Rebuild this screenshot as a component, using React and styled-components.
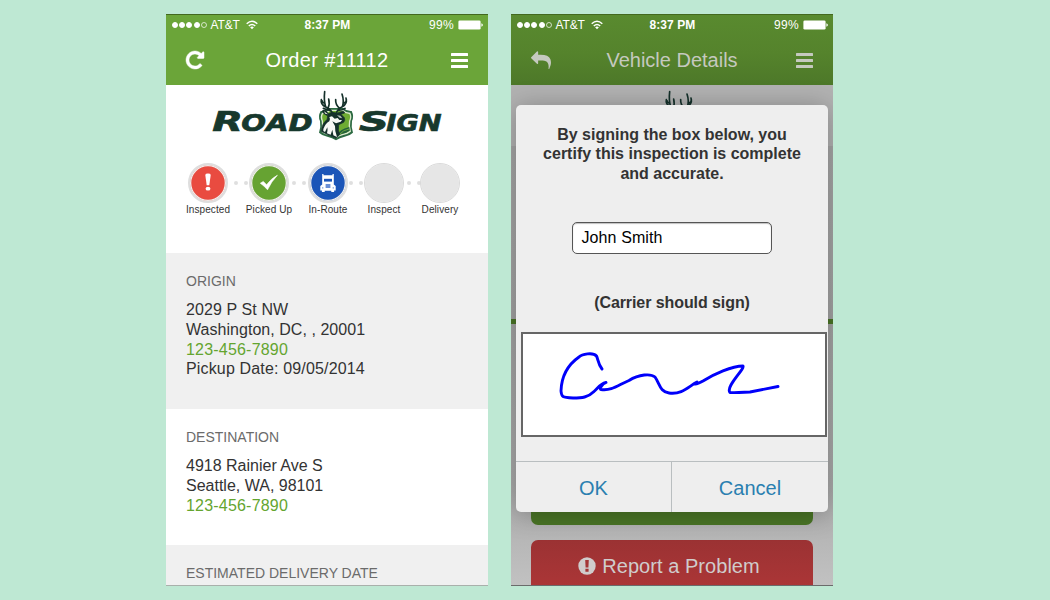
import React from "react";
import styled, { createGlobalStyle } from "styled-components";

const GlobalStyle = createGlobalStyle`
  * { box-sizing: border-box; }
  body {
    margin: 0;
    background: #bee8d3;
    font-family: "Liberation Sans", Arial, sans-serif;
    color: #333;
  }
`;

const Stage = styled.main`
  display: flex;
  gap: 23px;
  width: 1050px;
  height: 600px;
  padding: 14px 0 0 166px;
  overflow: hidden;
  background: #bee8d3;
`;

const Phone = styled.section`
  position: relative;
  display: flex;
  flex-direction: column;
  width: 322px;
  height: 572px;
  overflow: hidden;
  background: ${(p) => (p.$dimmed ? "#b2b2b2" : "#fff")};
  border-bottom: 1px solid ${(p) => (p.$dimmed ? "#6b6b6b" : "#a9b0ab")};
`;

const Header = styled.header`
  flex: none;
  height: 71px;
  border-top: 1px solid #43681f;
  color: #fff;
  background: ${(p) =>
    p.$dimmed ? "linear-gradient(#598a2f, #55832c 55%, #4d7829)" : "#6ba539"};
`;

const StatusBar = styled.div`
  display: grid;
  grid-template-columns: 1fr auto 1fr;
  align-items: center;
  height: 20px;
  padding: 0 5px 0 6px;
  font-size: 12px;
`;

const Carrier = styled.div`
  display: flex;
  align-items: center;
  gap: 1.2px;
  svg { margin-left: 4.5px; }
`;

const CarrierName = styled.span`
  margin-left: 2.5px;
  font-size: 12px;
  letter-spacing: -0.1px;
`;

const SignalDot = styled.i`
  width: 6px;
  height: 6px;
  border-radius: 50%;
  border: 1px solid #fff;
  background: ${(p) => (p.$on ? "#fff" : "transparent")};
  opacity: ${(p) => (p.$on ? 1 : 0.7)};
`;

const Clock = styled.b`
  font-size: 12px;
  letter-spacing: 0.08px;
`;

const Power = styled.div`
  display: flex;
  align-items: center;
  justify-content: flex-end;
  gap: 4px;
  letter-spacing: 0.35px;
`;

const NavBar = styled.div`
  display: flex;
  align-items: center;
  justify-content: space-between;
  height: 50px;
  padding: 0 20px;
  color: ${(p) => (p.$dimmed ? "#c5c9bf" : "#fff")};
`;

const NavTitle = styled.h1`
  margin: 0;
  font-size: 20px;
  font-weight: 400;
  line-height: 24px;
  letter-spacing: ${(p) => p.$tracking || 0}px;
`;

const NavSlot = styled.div`
  display: flex;
  width: 20px;
  justify-content: ${(p) => (p.$end ? "flex-end" : "flex-start")};
`;

const MenuBars = styled.div`
  display: flex;
  flex-direction: column;
  gap: 3px;
  width: 17px;
  padding-top: 1px;
  i { height: 3px; border-radius: 0.5px; background: currentColor; }
`;

const LogoRow = styled.div`
  flex: none;
  height: 61px;
  padding-left: 34px;
  svg { display: block; }
`;

const Steps = styled.div`
  display: flex;
  flex: none;
  height: 107px;
  padding: 17px 0 0 22px;
`;

const Step = styled.div`
  display: flex;
  flex-direction: column;
  align-items: center;
  width: 40px;
`;

const StepDisc = styled.div`
  display: flex;
  align-items: center;
  justify-content: center;
  width: 40px;
  height: 40px;
  border-radius: 50%;
  border: ${(p) => (p.$fill ? "2px solid #dedede" : "1px solid #dadada")};
  background: ${(p) => p.$fill || "#e6e6e6"};
  background-clip: padding-box;
  box-shadow: ${(p) => (p.$fill ? "inset 0 0 0 1.3px #f0eeec" : "none")};
`;

const StepLabel = styled.span`
  margin-top: 0.6px;
  font-size: 10px;
  line-height: 12px;
  letter-spacing: 0.08px;
  white-space: nowrap;
`;

const Connector = styled.div`
  display: flex;
  gap: 6px;
  width: ${(p) => p.$width}px;
  padding: 18px 0 0 ${(p) => p.$lead}px;
  i { flex: none; width: 4px; height: 4px; border-radius: 50%; background: #dfdfdf; }
`;

const Stop = styled.section`
  flex: none;
  height: ${(p) => p.$height}px;
  padding: 20px 20px 0;
  background: ${(p) => (p.$shaded ? "#f0f0f0" : "#fff")};
`;

const StopTitle = styled.h2`
  margin: 0 0 10px;
  font-size: 14px;
  font-weight: 400;
  line-height: 17px;
  color: #6b6b6b;
`;

const StopLine = styled.div`
  height: 19.8px;
  font-size: 16px;
  line-height: 19.8px;
  letter-spacing: ${(p) => p.$tracking || 0}px;
  color: ${(p) => (p.$link ? "#64a52f" : "#333")};
`;

const Backdrop = styled.div`
  display: flex;
  flex: 1;
  flex-direction: column;
  background: linear-gradient(#b2b2b2 61px, #a6a6a6 61px, #a3a3a3 234px, #aaa 400px, #c3c3c3);
`;

const Rule = styled.div`
  height: 5px;
  margin-top: 173px;
  background: #4a7526;
`;

const WideButton = styled.div`
  display: flex;
  flex: none;
  align-items: center;
  justify-content: center;
  gap: 6px;
  height: 52px;
  margin: ${(p) => p.$top}px 20px 0;
  padding-right: 6px;
  border-radius: 7px;
  font-size: 20px;
  letter-spacing: 0.05px;
  color: #d0cccc;
  background: ${(p) => p.$fill};
`;

const Dialog = styled.div`
  position: absolute;
  left: 5px;
  top: 91px;
  display: flex;
  flex-direction: column;
  align-items: center;
  width: 312px;
  height: 407px;
  border-radius: 5px;
  background: #eee;
  box-shadow: 0 2px 26px rgba(0, 0, 0, 0.28);
`;

const DialogText = styled.p`
  margin: 20px 0 0;
  font-size: 16px;
  font-weight: 700;
  line-height: 19.3px;
  text-align: center;
  white-space: pre-line;
`;

const NameField = styled.div`
  width: 200px;
  height: 32px;
  margin-top: 39px;
  padding: 0 8.5px;
  border: 1px solid #555;
  border-radius: 5px;
  background: #fff;
  box-shadow: inset 0 1px 1px rgba(0, 0, 0, 0.25);
  font-size: 16px;
  line-height: 29.5px;
  letter-spacing: 0.1px;
  color: #000;
`;

const SignHint = styled(DialogText)`
  margin-top: 39px;
  letter-spacing: -0.08px;
`;

const SignaturePad = styled.div`
  align-self: flex-start;
  width: 306px;
  height: 105px;
  margin: 20px 0 0 5px;
  border: 2px solid #666;
  background: #fff;
  svg { display: block; }
`;

const Actions = styled.div`
  display: flex;
  align-self: stretch;
  height: 51px;
  margin-top: auto;
  border-top: 1px solid #b9bec0;
`;

const Action = styled.div`
  display: flex;
  flex: none;
  align-items: center;
  justify-content: center;
  width: ${(p) => p.$width}px;
  padding-top: 3px;
  font-size: 20px;
  color: #2a7fb0;
  & + & { border-left: 1px solid #b9bec0; }
`;

function Wifi() {
  return (
    <svg width="12" height="10" viewBox="0 0 12 10" fill="none" stroke="#fff" strokeWidth="1.5">
      <path d="M.7 3.7Q6-1.2 11.3 3.7" />
      <path d="M2.8 6Q6 3 9.2 6" />
      <path d="M6 9.2 4.1 7.3Q6 5.9 7.9 7.3Z" fill="#fff" stroke="none" />
    </svg>
  );
}

function Battery() {
  return (
    <svg width="25" height="10" viewBox="0 0 25 10">
      <rect x=".4" y=".4" width="22.2" height="9.2" rx="1.4" fill="#fff" />
      <path d="M23.4 3.2q1.5.5 1.5 1.8t-1.5 1.8z" fill="#fff" />
    </svg>
  );
}

function Refresh() {
  return (
    <svg
      width="18"
      height="18"
      viewBox="0 128 1536 1536"
      fill="currentColor"
      stroke="currentColor"
      strokeWidth="40"
      overflow="visible"
    >
      <path d="M1536 256v448q0 26-19 45t-45 19h-448q-42 0-59-40-17-39 14-69l138-138q-148-137-349-137-104 0-198.5 40.5t-163.5 109.5-109.5 163.5-40.5 198.5 40.5 198.5 109.5 163.5 163.5 109.5 198.5 40.5q119 0 225-52t179-147q7-10 23-12 14 0 25 9l137 138q9 8 9.5 20.5t-7.5 22.5q-109 132-264 204.5t-327 72.5q-156 0-298-61t-245-164-164-245-61-298 61-298 164-245 245-164 298-61q147 0 284.5 55.5t244.5 156.5l130-129q29-31 70-14 39 17 39 59z" />
    </svg>
  );
}

function Reply() {
  return (
    <svg width="21" height="21" viewBox="0 0 1792 1792" fill="currentColor">
      <path
        transform="matrix(-1 0 0 1 1792 0)"
        d="M1792 640q0 26-19 45l-512 512q-19 19-45 19t-45-19-19-45v-256h-224q-98 0-175.5 6t-154 21.5-133 42.5-105.5 69.5-80 101-48.5 138.5-17.5 181q0 55 5 123 0 6 2.5 23.5t2.5 26.5q0 15-8.5 25t-23.5 10q-16 0-28-17-7-9-13-22t-13.5-30-10.5-24q-127-285-127-451 0-199 53-333 162-403 875-403h224v-256q0-26 19-45t45-19 45 19l512 512q19 19 19 45z"
      />
    </svg>
  );
}

function Bang() {
  return (
    <svg width="8" height="20" viewBox="0 0 8 20" fill="#fff">
      <path d="M1.3 2Q1.3.6 4 .6t2.7 1.4L5.3 12.2H2.7z" />
      <ellipse cx="4" cy="15.7" rx="2.4" ry="1.9" />
    </svg>
  );
}

function Tick() {
  return (
    <svg width="20" height="18" viewBox="0 0 20 18" fill="#fff" stroke="#fff" strokeWidth=".6">
      <path d="M1.3 9.2 4.3 7.4 7.6 10.8Q12 4.6 18.4 1.2 12.4 7.4 8.5 15.8 5.4 12 1.3 9.2z" />
    </svg>
  );
}

function Truck() {
  return (
    <svg width="16" height="20" viewBox="0 0 16 20">
      <path
        fill="#fff"
        d="M2.2 1h1.3v1.2h9V1h1.3v10.4l1.9 1.6v4.6h-1.6V19h-2.8v-1.2H4.7V19H1.9v-1.4H.3V13l1.9-1.6z"
      />
      <path fill="#1b55b8" d="M4 5.8h8v2.8H4z" />
      <path fill="#6a8fd6" d="M5.6 11h4.8v4H5.6z" />
      <path fill="#7d9edb" d="M2 14.2h1.4v1.2H2zm10.600 0H14v1.200h-1.400z" />
    </svg>
  );
}

function AlertDisc() {
  return (
    <svg width="18" height="18" viewBox="0 0 18 18">
      <circle cx="9" cy="9" r="8.7" fill="#d0cccc" />
      <path d="M7.2 3.1h3.6l-.4 7.4H7.6zM7.4 11.8h3.2v2.9H7.4z" fill="#a43536" />
    </svg>
  );
}

const wordmark = {
  fontFamily: '"DejaVu Sans", sans-serif',
  fontWeight: 700,
  fontStyle: "italic",
  fill: "#17382d",
  stroke: "#17382d",
  strokeWidth: 2,
};

function Logo({ emblemOnly }) {
  return (
    <svg width="250" height="60" viewBox="0 0 750 180">
      {!emblemOnly && (
        <g {...wordmark}>
          <text x="37" y="137" fontSize="79" textLength="92" lengthAdjust="spacingAndGlyphs">R</text>
          <text x="124" y="137" fontSize="68" textLength="214" lengthAdjust="spacingAndGlyphs">OAD</text>
          <text x="477" y="137" fontSize="77" textLength="90" lengthAdjust="spacingAndGlyphs">S</text>
          <text x="559" y="137" fontSize="68" textLength="166" lengthAdjust="spacingAndGlyphs">IGN</text>
        </g>
      )}
      <path
        d="M362 78Q378 79 386 69H430Q440 79 455 78Q463 94 456 108Q453 125 459 143Q449 153 434 155Q419 158 408 166Q397 158 382 155Q367 153 357 143Q363 125 360 108Q353 94 362 78Z"
        fill="#2c6a42"
      />
      <path
        d="M366 83Q380 83 388 74H428Q438 83 451 83Q457 94 451 108Q448 125 453 140Q443 148 430 150Q418 153 408 160Q398 153 386 150Q373 148 363 140Q368 125 365 108Q359 94 366 83Z"
        fill="#dcebcf"
      />
      <path
        d="M369 87Q382 87 390 78H426Q436 87 448 87Q453 95 447 108Q444 124 449 137Q440 144 428 146Q416 149 408 155Q400 149 388 146Q376 144 367 137Q372 124 369 108Q364 96 369 87Z"
        fill="#6eac33"
      />
      <path d="M414 151Q416 133 448 126L449 137Q438 144 428 146Z" fill="#24613c" />
      <path d="M420 147Q428 136 447 132" fill="none" stroke="#79b23d" strokeWidth="2.5" />
      <path
        d="M386 86 376 76Q367 73 367 79 371 89 383 92L381 104Q367 113 363 139L386 150 408 160 419 149Q413 134 416 119L431 112Q437 106 433 98L423 88 434 84Q433 77 424 80L410 85Q398 78 386 86Z"
        fill="#14302a"
        stroke="#14302a"
        strokeWidth="2"
        strokeLinejoin="round"
      />
      <path
        d="M372 79 384 88 376 86ZM388 96Q392 102 388 109 376 116 370 132L370 138 375 141 382 127Q384 137 381 145L392 149 397 134 400 151 411 156Q404 138 405 123L397 109 408 115 422 110 426 105 418 105 413 99 404 101 396 94Z"
        fill="#f7f8f5"
      />
      <path d="M411 91 421 92 427 100 419 98Z" fill="#b9c2bd" />
      <g fill="none" stroke="#14302a" strokeLinecap="round" strokeWidth="5">
        <path d="M397 84Q391 71 377 66Q361 58 364 44M377 66Q371 47 374 20M384 70Q390 57 386 42M373 55Q367 52 366 47M391 76Q379 75 370 70" />
        <path d="M409 84Q413 71 427 65Q443 57 438 39M427 65Q433 48 426 27M419 70Q406 60 407 44M432 54Q440 52 439 43M414 76Q427 76 435 70" />
      </g>
    </svg>
  );
}

function Signature() {
  return (
    <svg width="302" height="101" viewBox="523 334 302 101">
      <path
        d="M602 369C598 364 598 359 596.5 356C593 352 582 354 579 357C569 364 561.5 374 561 391C561.5 397 562 397.5 573 398C582 398 588 397.5 594 391.5C598 388 600 384 606 382.5C602 384 599 389 601 389.5C612 391 618 385 629 380.5C639 374 651 373.5 655 377C660 384 660 392 669 393C682 395 689 386 697 382C691 385 696 385 703 381C714 374 732 366 743 366C745 369 725 387 730 392.5C737 393 746 392 750 392L778 386.5"
        fill="none"
        stroke="#0000fa"
        strokeWidth="2.9"
        strokeLinecap="round"
        strokeLinejoin="round"
      />
    </svg>
  );
}

function TopBar({ title, tracking, icon, dimmed }) {
  return (
    <Header $dimmed={dimmed}>
      <StatusBar>
        <Carrier>
          {[1, 1, 1, 1, 0].map((on, i) => (
            <SignalDot key={i} $on={!!on} />
          ))}
          <CarrierName>AT&amp;T</CarrierName>
          <Wifi />
        </Carrier>
        <Clock>8:37 PM</Clock>
        <Power>
          <span>99%</span>
          <Battery />
        </Power>
      </StatusBar>
      <NavBar $dimmed={dimmed}>
        <NavSlot>{icon}</NavSlot>
        <NavTitle $tracking={tracking}>{title}</NavTitle>
        <NavSlot $end>
          <MenuBars>
            <i />
            <i />
            <i />
          </MenuBars>
        </NavSlot>
      </NavBar>
    </Header>
  );
}

const steps = [
  { label: "Inspected", fill: "#e94b40", icon: <Bang />, link: [21, 6] },
  { label: "Picked Up", fill: "#66a332", icon: <Tick />, link: [19, 3] },
  { label: "In-Route", fill: "#1b55b8", icon: <Truck />, link: [16, 1] },
  { label: "Inspect", link: [16, 3] },
  { label: "Delivery" },
];

export default function App() {
  return (
    <>
      <GlobalStyle />
      <Stage>
        <Phone>
          <TopBar title="Order #11112" tracking={0.34} icon={<Refresh />} />
          <LogoRow>
            <Logo />
          </LogoRow>
          <Steps>
            {steps.map((s) => (
              <React.Fragment key={s.label}>
                <Step>
                  <StepDisc $fill={s.fill}>{s.icon}</StepDisc>
                  <StepLabel>{s.label}</StepLabel>
                </Step>
                {s.link && (
                  <Connector $width={s.link[0]} $lead={s.link[1]}>
                    <i />
                    <i />
                  </Connector>
                )}
              </React.Fragment>
            ))}
          </Steps>
          <Stop $shaded $height={156}>
            <StopTitle>ORIGIN</StopTitle>
            <StopLine $tracking={0.1}>2029 P St NW</StopLine>
            <StopLine $tracking={0.04}>Washington, DC, , 20001</StopLine>
            <StopLine $link $tracking={0.2}>123-456-7890</StopLine>
            <StopLine $tracking={0.16}>Pickup Date: 09/05/2014</StopLine>
          </Stop>
          <Stop $height={136}>
            <StopTitle>DESTINATION</StopTitle>
            <StopLine>4918 Rainier Ave S</StopLine>
            <StopLine>Seattle, WA, 98101</StopLine>
            <StopLine $link $tracking={0.2}>123-456-7890</StopLine>
          </Stop>
          <Stop $shaded $height={60}>
            <StopTitle>ESTIMATED DELIVERY DATE</StopTitle>
          </Stop>
        </Phone>

        <Phone $dimmed>
          <TopBar title="Vehicle Details" icon={<Reply />} dimmed />
          <Backdrop>
            <LogoRow>
              <Logo emblemOnly />
            </LogoRow>
            <Rule />
            <WideButton $top={149} $fill="#4a7526" />
            <WideButton $top={15} $fill="linear-gradient(#9b3233, #ad3637)">
              <AlertDisc />
              Report a Problem
            </WideButton>
          </Backdrop>
          <Dialog>
            <DialogText>
              {"By signing the box below, you\ncertify this inspection is complete\nand accurate."}
            </DialogText>
            <NameField>John Smith</NameField>
            <SignHint>(Carrier should sign)</SignHint>
            <SignaturePad>
              <Signature />
            </SignaturePad>
            <Actions>
              <Action $width={155}>OK</Action>
              <Action $width={157}>Cancel</Action>
            </Actions>
          </Dialog>
        </Phone>
      </Stage>
    </>
  );
}
